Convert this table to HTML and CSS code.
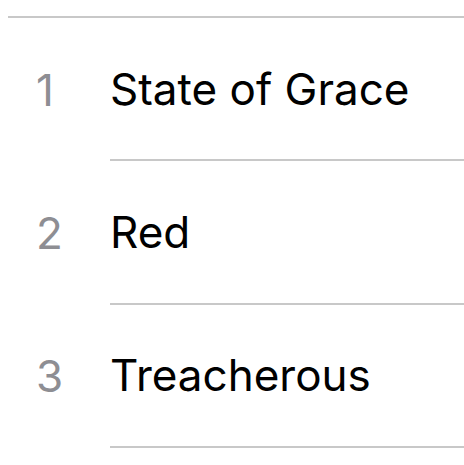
FILE: index.html
```html
<!DOCTYPE html>
<html>
<head>
<meta charset="utf-8">
<link rel="stylesheet" href="styles.css">
</head>
<body>
<ol class="tracks">
  <li class="track"><span class="num">1</span><span class="title">State of Grace</span></li>
  <li class="track"><span class="num">2</span><span class="title">Red</span></li>
  <li class="track"><span class="num">3</span><span class="title">Treacherous</span></li>
</ol>
</body>
</html>
```
FILE: styles.css
```css
html, body {
  margin: 0;
  padding: 0;
  background: #ffffff;
}
body {
  font-family: Inter, "Liberation Sans", sans-serif;
  padding-top: 16px;
}
.tracks {
  list-style: none;
  margin: 0 0 0 8px;
  padding: 0;
  border-top: 2px solid #c8c8c8;
}
.track {
  display: flex;
  height: 143.33px;
}
.num {
  width: 102px;
  box-sizing: border-box;
  padding-left: 28px;
  display: flex;
  align-items: center;
  font-size: 44px;
  color: #8e8e93;
}
.title {
  flex: 1;
  display: flex;
  align-items: center;
  font-size: 44px;
  color: #000;
  border-bottom: 2px solid #c8c8c8;
}
```
